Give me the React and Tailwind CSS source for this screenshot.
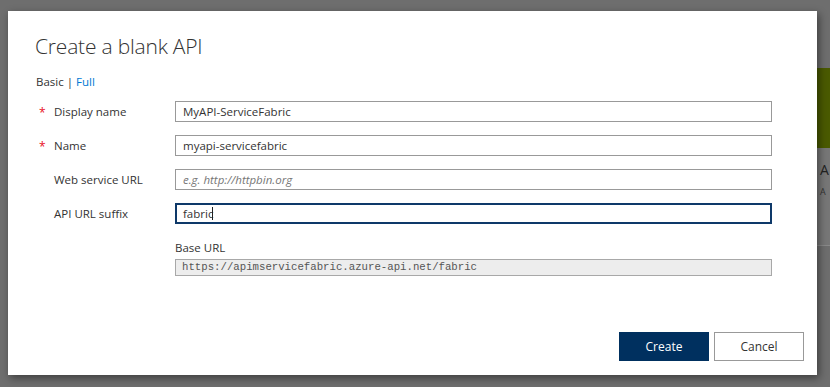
import React from "react";

const Field = ({ label, required, children }) => (
  <div className="flex items-center h-[21px]">
    <div className="w-[139px] flex items-center pl-[3px]">
      <span className="w-[15px] text-[#e81123] text-[12px] leading-none pt-[2px]">{required ? "*" : ""}</span>
      <span className="text-[11.5px] text-[#333]">{label}</span>
    </div>
    <div className="flex-1">{children}</div>
  </div>
);

const App = () => {
  return (
    <div
      className="relative w-[830px] h-[387px] overflow-hidden bg-[#6e6e6e]"
      style={{ fontFamily: '"Segoe UI", "Open Sans", "Noto Sans", sans-serif' }}
    >
      {/* page behind the overlay */}
      <div className="absolute left-[817px] top-[68px] w-[40px] h-[178px] flex flex-col">
        <div className="h-[80px] bg-[#4a5a00]" />
        <div className="flex-1 bg-[#777777] border-b border-[#8a8a8a] pl-[3px] pt-[15px]">
          <div className="text-[14px] text-[#222] leading-none">A</div>
          <div className="text-[9px] text-[#333] mt-[10px] leading-none">A</div>
        </div>
      </div>

      <div className="absolute left-[8px] top-[11px] w-[809px] h-[364px] bg-white shadow-[2px_3px_8px_rgba(0,0,0,0.45)] flex flex-col">
        <h1 className="pl-[27px] pt-[20px] text-[21px] font-light text-[#333] leading-[30px] tracking-[-0.2px]">
          Create a blank API
        </h1>
        <div className="pl-[28px] mt-[13px] text-[11.5px] text-[#333] leading-[16px]">
          Basic | <span className="text-[#0078d4]">Full</span>
        </div>

        <div className="pl-[28px] pr-[45px] mt-[11px] flex flex-col gap-[13px]">
          <Field label="Display name" required>
            <div className="h-[21px] border border-[#999] px-[7px] flex items-center text-[11.5px] text-[#333]">
              MyAPI-ServiceFabric
            </div>
          </Field>
          <Field label="Name" required>
            <div className="h-[21px] border border-[#999] px-[7px] flex items-center text-[11.5px] text-[#333]">
              myapi-servicefabric
            </div>
          </Field>
          <Field label="Web service URL">
            <div className="h-[21px] border border-[#999] px-[7px] flex items-center text-[11.5px] italic text-[#777]">
              e.g. http://httpbin.org
            </div>
          </Field>
          <Field label="API URL suffix">
            <div className="h-[21px] border border-[#0e3969] outline outline-1 outline-[#0e3969] -outline-offset-2 px-[7px] flex items-center text-[11.5px] text-[#333]">
              fabric<span className="w-px h-[13px] bg-[#222] ml-[-1px]" />
            </div>
          </Field>
        </div>

        <div className="pl-[167px] pr-[45px] mt-[16px]">
          <div className="text-[11.5px] text-[#333] leading-[16px]">Base URL</div>
          <div
            className="mt-[3px] h-[17px] bg-[#ededed] border border-[#a8a8a8] pl-[6px] flex items-center text-[10.7px] text-[#555]"
            style={{ fontFamily: '"Liberation Mono", monospace' }}
          >
            https://apimservicefabric.azure-api.net/fabric
          </div>
        </div>

        <div className="mt-auto pb-[14px] pr-[13px] flex justify-end gap-[5px]">
          <button className="w-[90px] h-[29px] bg-[#00305f] text-white text-[12px]">Create</button>
          <button className="w-[90px] h-[29px] bg-white border border-[#999] text-[#333] text-[12px]">Cancel</button>
        </div>
      </div>
    </div>
  );
};

export default App;
